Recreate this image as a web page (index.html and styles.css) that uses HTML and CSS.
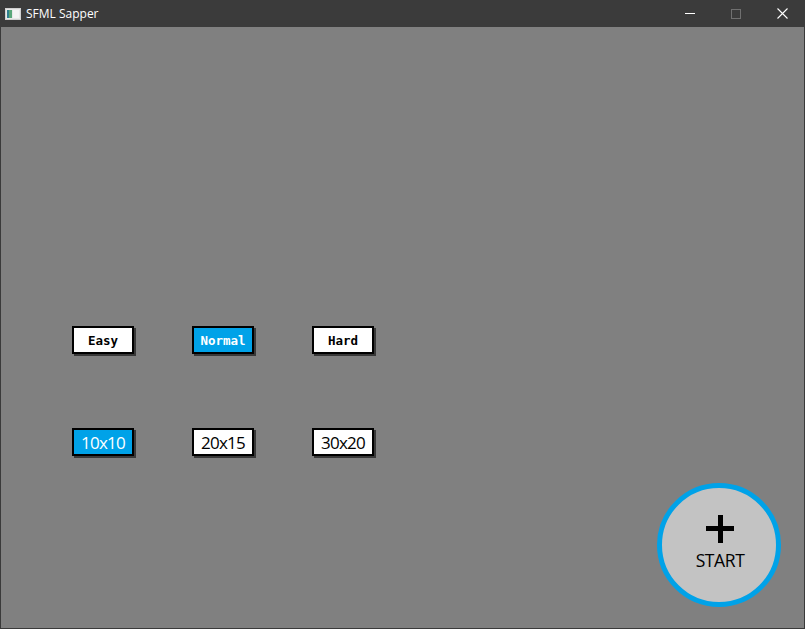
FILE: index.html
```html
<!DOCTYPE html>
<html>
<head>
<meta charset="utf-8">
<link rel="stylesheet" href="styles.css">
</head>
<body>
<div class="window">
  <div class="titlebar">
    <svg class="app-icon" width="16" height="12" viewBox="0 0 16 12">
      <rect x="0.5" y="0.5" width="15" height="11" fill="#e8e8e8" stroke="#d0d0d0"/>
      <rect x="2" y="2" width="5" height="8" fill="#2f7f8f"/>
      <rect x="4" y="2" width="3" height="8" fill="#5aa77a"/>
      <rect x="8" y="2" width="6" height="8" fill="#f4f4f4"/>
    </svg>
    <span class="title">SFML Sapper</span>
    <div class="controls">
      <span class="ctl ctl-min"><svg width="10" height="10" viewBox="0 0 10 10"><line x1="0" y1="5.5" x2="10" y2="5.5" stroke="#fff" stroke-width="1"/></svg></span>
      <span class="ctl ctl-max"><svg width="10" height="10" viewBox="0 0 10 10"><rect x="0.5" y="0.5" width="9" height="9" fill="none" stroke="#707070" stroke-width="1"/></svg></span>
      <span class="ctl ctl-close"><svg width="11" height="11" viewBox="0 0 11 11"><path d="M0.5 0.5 L10.5 10.5 M10.5 0.5 L0.5 10.5" stroke="#fff" stroke-width="1.1"/></svg></span>
    </div>
  </div>
  <div class="canvas">
    <div class="row">
      <div class="btn pixel">Easy</div>
      <div class="btn pixel active">Normal</div>
      <div class="btn pixel">Hard</div>
    </div>
    <div class="row row-size">
      <div class="btn size active">10x10</div>
      <div class="btn size">20x15</div>
      <div class="btn size">30x20</div>
    </div>
    <div class="start">
      <div class="plus"></div>
      <div class="start-label">START</div>
    </div>
  </div>
</div>
</body>
</html>
```
FILE: styles.css
```css
html, body {
  margin: 0;
  padding: 0;
  background: #3a3a3a;
}
.window {
  width: 805px;
  height: 629px;
  display: flex;
  flex-direction: column;
  background: #3a3a3a;
  overflow: hidden;
}
.titlebar {
  height: 27px;
  display: flex;
  align-items: center;
  background: #3b3b3b;
  color: #fff;
  font-family: "Open Sans", "Noto Sans", sans-serif;
  font-size: 12px;
  flex: none;
}
.app-icon {
  margin-left: 5px;
  margin-top: 1px;
}
.title {
  margin-left: 5px;
  margin-top: -1px;
}
.controls {
  margin-left: auto;
  display: flex;
  height: 27px;
}
.ctl {
  width: 46px;
  display: flex;
  align-items: center;
  justify-content: center;
}
.ctl-min { margin-top: -1px; }
.canvas {
  flex: 1;
  margin: 0 1px 1px 1px;
  background: #808080;
  display: flex;
  flex-direction: column;
  padding: 299px 0 0 71px;
}
.row {
  display: flex;
  gap: 58px;
}
.row-size {
  margin-top: 74px;
}
.btn {
  width: 62px;
  height: 28px;
  box-sizing: border-box;
  border: 2px solid #000;
  background: #fff;
  color: #000;
  box-shadow: 2px 2px 0 #383838;
  display: flex;
  align-items: center;
  justify-content: center;
}
.btn.active {
  background: #00a2e8;
  color: #fff;
}
.pixel {
  font-family: "DejaVu Sans Mono", "Liberation Mono", monospace;
  font-weight: bold;
  font-size: 12.5px;
}
.size {
  font-family: "Open Sans", "Noto Sans", sans-serif;
  font-size: 17px;
  letter-spacing: -0.8px;
  padding-top: 1px;
}
.start {
  align-self: flex-end;
  margin-top: 27px;
  margin-right: 23px;
  width: 124px;
  height: 124px;
  box-sizing: border-box;
  border-radius: 50%;
  border: 5px solid #00a2e8;
  background: #c3c3c3;
  display: flex;
  flex-direction: column;
  align-items: center;
}
.plus {
  position: relative;
  width: 28px;
  height: 28px;
  margin-top: 27px;
  margin-left: 1px;
}
.plus::before, .plus::after {
  content: "";
  position: absolute;
  background: #000;
}
.plus::before {
  left: 0;
  top: 11px;
  width: 28px;
  height: 5px;
}
.plus::after {
  left: 12px;
  top: 0;
  width: 5px;
  height: 28px;
}
.start-label {
  margin-top: 7px;
  margin-left: 2px;
  font-family: "Open Sans", "Noto Sans", sans-serif;
  font-size: 17.5px;
  color: #000;
  line-height: 20px;
  letter-spacing: -0.4px;
}
```
